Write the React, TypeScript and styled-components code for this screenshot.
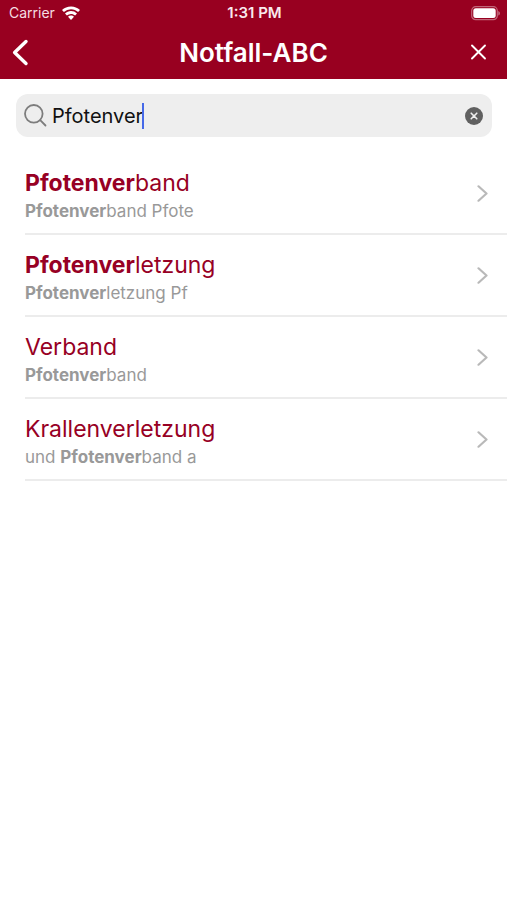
import React, { useRef, useState } from "react";
import styled, { createGlobalStyle } from "styled-components";

const color = {
  brand: "#980020",
  title: "#970024",
  muted: "#999999",
  line: "#ececec",
  field: "#eeeeee",
  caret: "#4669e8",
};

const GlobalStyle = createGlobalStyle`
  *, *::before, *::after { box-sizing: border-box; }
  body {
    margin: 0;
    background: #ffffff;
    font-family: Inter, "Liberation Sans", sans-serif;
    -webkit-font-smoothing: antialiased;
  }
`;

const Screen = styled.div`
  min-height: 100vh;
  background: #ffffff;
`;

const TopArea = styled.header`
  background: ${color.brand};
  color: #ffffff;
`;

const StatusBar = styled.div`
  display: grid;
  grid-template-columns: 1fr auto 1fr;
  align-items: center;
  height: 26px;
  padding: 0 7px 0 9px;
  font-size: 14px;
  line-height: 18px;
`;

const Carrier = styled.div`
  display: flex;
  align-items: center;
  gap: 6px;
  color: #f5dde2;
`;

const Clock = styled.time`
  font-size: 15px;
  font-weight: 600;
  color: #f9e9ec;
`;

const Battery = styled.div`
  display: flex;
  justify-content: flex-end;
`;

const NavBar = styled.nav`
  display: grid;
  grid-template-columns: 56px 1fr 56px;
  align-items: center;
  height: 53px;
`;

const Heading = styled.h1`
  margin: 0;
  text-align: center;
  font-size: 26px;
  line-height: 32px;
  font-weight: 600;
`;

const IconButton = styled.button<{ $side?: "left" | "right" }>`
  display: flex;
  align-items: center;
  justify-content: ${(p) =>
    p.$side === "left" ? "flex-start" : p.$side === "right" ? "flex-end" : "center"};
  height: 44px;
  padding: 0 ${(p) => (p.$side === "right" ? "20px" : "0")} 0
    ${(p) => (p.$side === "left" ? "11px" : "0")};
  border: 0;
  background: none;
  color: inherit;
  cursor: pointer;
`;

const SearchField = styled.label`
  display: flex;
  align-items: center;
  height: 43px;
  margin: 15px 15px 0 16px;
  padding: 0 9px 0 8px;
  border-radius: 12px;
  background: ${color.field};
  cursor: text;
`;

const SearchInput = styled.input`
  field-sizing: content;
  min-width: 1px;
  max-width: 100%;
  margin-left: 5px;
  padding: 0;
  border: 0;
  outline: 0;
  background: none;
  color: #111111;
  caret-color: transparent;
  font: 400 20px/26px Inter, "Liberation Sans", sans-serif;
`;

const Caret = styled.span`
  flex: none;
  width: 2px;
  height: 26px;
  margin-left: -1px;
  margin-right: auto;
  background: ${color.caret};
`;

const Results = styled.ul`
  margin: 16px 0 0;
  padding: 0 0 0 25px;
  list-style: none;
`;

const ResultItem = styled.li`
  border-bottom: 2px solid ${color.line};
`;

const ResultLink = styled.a`
  display: flex;
  align-items: center;
  justify-content: space-between;
  height: 80px;
  padding-right: 18px;
  text-decoration: none;
`;

const ResultText = styled.div`
  display: flex;
  flex-direction: column;
  gap: 2px;
  padding-top: 6px;
`;

const ResultTitle = styled.span`
  color: ${color.title};
  font-size: 23px;
  line-height: 28px;
`;

const ResultSnippet = styled.span`
  color: ${color.muted};
  font-size: 17px;
  line-height: 24px;
`;

const Match = styled.strong`
  font-weight: 700;
`;

const WifiIcon = () => (
  <svg width="20" height="15" viewBox="0 0 20 15" fill="#ffffff" aria-hidden="true">
    <path d="M10 .4C6.500.4 3.300 1.700 1 3.900l1.900 2.200A10.300 10.300 0 0 1 10 3.300c2.700 0 5.200 1.100 7.100 2.800L19 3.900A13 13 0 0 0 10 .4Z" />
    <path d="M10 5c-2.300 0-4.400.9-6 2.400l1.900 2.100A6.100 6.100 0 0 1 10 7.900c1.600 0 3 .6 4.100 1.600L16 7.400A8.700 8.700 0 0 0 10 5Z" />
    <path d="M10 9.600c-1.200 0-2.200.5-3 1.200l3 3.300 3-3.300c-.8-.7-1.800-1.200-3-1.200Z" />
  </svg>
);

const BatteryIcon = () => (
  <svg width="29" height="15" viewBox="0 0 29 15" aria-hidden="true">
    <rect x="0.7" y="0.7" width="25.600" height="13" rx="4" fill="none" stroke="#ffffff" strokeOpacity="0.4" strokeWidth="1.200" />
    <rect x="2.300" y="2.300" width="22.400" height="9.800" rx="2.500" fill="#ffffff" />
    <path d="M27.400 5v4.600c.9-.4 1.400-1.300 1.400-2.300s-.5-1.900-1.400-2.300Z" fill="#ffffff" fillOpacity="0.5" />
  </svg>
);

const BackIcon = () => (
  <svg width="18" height="28" viewBox="0 0 18 28" fill="none" stroke="#ffffff" strokeWidth="3.400" strokeLinecap="round" strokeLinejoin="round" aria-hidden="true">
    <path d="M15 2.500 3.600 13.500 15 24.500" />
  </svg>
);

const CloseIcon = () => (
  <svg width="17" height="17" viewBox="0 0 17 17" fill="none" stroke="#ffffff" strokeWidth="1.900" strokeLinecap="round" aria-hidden="true">
    <path d="m2 1.500 13 13M15 1.500 2 14.500" />
  </svg>
);

const SearchIcon = () => (
  <svg width="23" height="23" viewBox="0 0 23 23" fill="none" stroke="#7d7d7d" strokeWidth="1.800" strokeLinecap="round" aria-hidden="true">
    <circle cx="9.800" cy="9.800" r="8.800" />
    <path d="m16.200 16.200 5.300 5.300" />
  </svg>
);

const ClearIcon = () => (
  <svg width="18" height="18" viewBox="0 0 18 18" aria-hidden="true">
    <circle cx="9" cy="9" r="9" fill="#606060" />
    <path d="m6.200 6.200 5.600 5.600m0-5.600-5.600 5.600" stroke="#eeeeee" strokeWidth="1.600" strokeLinecap="round" />
  </svg>
);

const ChevronIcon = () => (
  <svg width="13" height="18" viewBox="0 0 13 18" fill="none" stroke="#b9b9b9" strokeWidth="2.200" strokeLinecap="round" strokeLinejoin="round" aria-hidden="true">
    <path d="m2.500 2.300 8 7.200-8 7.200" />
  </svg>
);

const entries = [
  { title: "Pfotenverband", snippet: "Pfotenverband Pfote" },
  { title: "Pfotenverletzung", snippet: "Pfotenverletzung Pf" },
  { title: "Verband", snippet: "Pfotenverband" },
  { title: "Krallenverletzung", snippet: "und Pfotenverband a" },
];

function Highlighted({ text, query }: { text: string; query: string }) {
  const at = query ? text.indexOf(query) : -1;
  if (at < 0) return <>{text}</>;
  return (
    <>
      {text.slice(0, at)}
      <Match>{query}</Match>
      {text.slice(at + query.length)}
    </>
  );
}

export default function App() {
  const [query, setQuery] = useState("Pfotenver");
  const inputRef = useRef<HTMLInputElement>(null);
  const results = entries.filter((e) => e.title.includes(query) || e.snippet.includes(query));

  const clear = () => {
    setQuery("");
    inputRef.current?.focus();
  };

  return (
    <Screen>
      <GlobalStyle />
      <TopArea>
        <StatusBar>
          <Carrier>
            Carrier
            <WifiIcon />
          </Carrier>
          <Clock>1:31 PM</Clock>
          <Battery>
            <BatteryIcon />
          </Battery>
        </StatusBar>
        <NavBar>
          <IconButton type="button" $side="left" aria-label="Zurück">
            <BackIcon />
          </IconButton>
          <Heading>Notfall-ABC</Heading>
          <IconButton type="button" $side="right" aria-label="Schließen">
            <CloseIcon />
          </IconButton>
        </NavBar>
      </TopArea>
      <main>
        <SearchField>
          <SearchIcon />
          <SearchInput
            ref={inputRef}
            type="text"
            aria-label="Suche"
            value={query}
            onChange={(e) => setQuery(e.target.value)}
          />
          <Caret />
          <IconButton type="button" aria-label="Eingabe löschen" onClick={clear}>
            <ClearIcon />
          </IconButton>
        </SearchField>
        <Results>
          {results.map((entry) => (
            <ResultItem key={entry.title}>
              <ResultLink href={`#${entry.title}`}>
                <ResultText>
                  <ResultTitle>
                    <Highlighted text={entry.title} query={query} />
                  </ResultTitle>
                  <ResultSnippet>
                    <Highlighted text={entry.snippet} query={query} />
                  </ResultSnippet>
                </ResultText>
                <ChevronIcon />
              </ResultLink>
            </ResultItem>
          ))}
        </Results>
      </main>
    </Screen>
  );
}
